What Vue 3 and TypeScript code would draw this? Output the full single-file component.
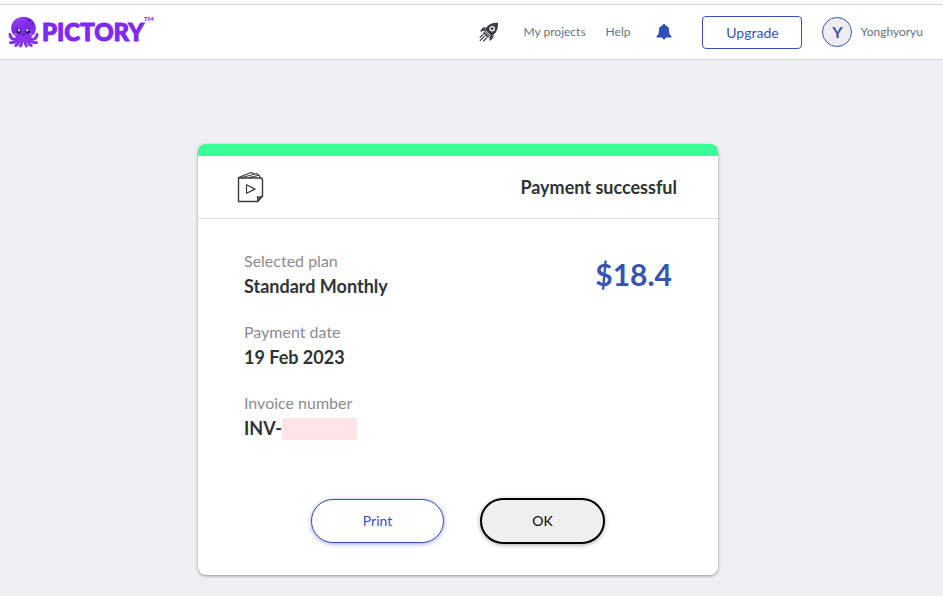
<script setup lang="ts">
interface Detail {
  label: string
  value: string
  redacted?: boolean
}

const userName = 'Yonghyoryu'
const amount = '$18.4'
const details: Detail[] = [
  { label: 'Selected plan', value: 'Standard Monthly' },
  { label: 'Payment date', value: '19 Feb 2023' },
  { label: 'Invoice number', value: 'INV-', redacted: true },
]

function printReceipt(): void {
  window.print()
}
</script>

<template>
  <div class="page">
    <header class="topbar">
      <a class="brand" href="#" aria-label="Pictory home">
        <svg class="mascot" viewBox="0 0 32 32" aria-hidden="true">
          <defs>
            <linearGradient id="skin" x1="0" y1="0" x2="0.3" y2="1">
              <stop offset="0" stop-color="#9a48f6" />
              <stop offset="0.5" stop-color="#7c2ae8" />
              <stop offset="1" stop-color="#8a34f0" />
            </linearGradient>
          </defs>
          <g fill="none" stroke="#8430ec" stroke-width="3" stroke-linecap="round">
            <path d="M10 22C6 25 2.500 23 2 18.500" />
            <path d="M22 22c4 3 7.500 1 8-3.500" />
            <path d="M11 23c-2 3-5 4.500-8.500 4" />
            <path d="M21 23c2 3 5 4.500 8.500 4" />
            <path d="M12 23c-.5 4-2 6-4 7" />
            <path d="M20 23c.5 4 2 6 4 7" />
            <path d="M14.500 24c0 3-.5 5-1.500 6.500" />
            <path d="M17.500 24c0 3 .5 5 1.500 6.500" />
          </g>
          <path d="M16 .3C8.500.3 3.300 5.500 3.300 12c0 4.500 2 6.500 4.200 8 1 2.500 3 6.500 8.500 6.500s7.500-4 8.500-6.500c2.200-1.500 4.200-3.500 4.200-8C28.700 5.500 23.500.3 16 .3z" fill="url(#skin)" />
          <circle cx="22" cy="4" r="1.500" fill="#5f16bd" />
          <circle cx="25" cy="7.500" r="1" fill="#5f16bd" />
          <circle cx="19.300" cy="2.600" r="0.700" fill="#5f16bd" />
          <ellipse cx="11" cy="15.200" rx="2.100" ry="2.500" fill="#1c1035" />
          <ellipse cx="20.300" cy="15.200" rx="2.100" ry="2.500" fill="#1c1035" />
          <circle cx="11.300" cy="14.300" r="1.200" fill="#fff" />
          <circle cx="20" cy="14.300" r="1.200" fill="#fff" />
          <path d="M14 18q1.700 1.700 3.400 0" fill="none" stroke="#351069" stroke-width="0.900" />
          <ellipse cx="7.800" cy="18.200" rx="1.500" ry="1" fill="#b65cf5" />
          <ellipse cx="23.500" cy="18.200" rx="1.500" ry="1" fill="#b65cf5" />
        </svg>
        <span class="wordmark">PICTORY</span><span class="trademark">TM</span>
      </a>

      <nav class="nav" aria-label="Main">
        <a class="icon-link rocket" href="#" aria-label="What's new">
          <svg viewBox="0 0 20 20" aria-hidden="true">
            <path fill="#3c3f42" d="M19 .8C13.500.6 10.200 2 7.500 5.200L5 8.800l6.300 6.300 3.500-2.500C17.900 9.700 19.400 6.200 19 .8z" />
            <circle cx="13.200" cy="6.700" r="2.100" fill="#3c3f42" stroke="#fff" stroke-width="1.300" />
            <path fill="#3c3f42" d="M7 5.300C4.500 5 2.500 6.500 1 9.700l3.800-.6zM14.600 13c.4 2.600-1.200 4.400-4.200 6l.3-4z" />
            <path d="M6.600 8.600l4.800 4.800" stroke="#fff" stroke-width="0.800" />
            <path d="M4.600 10.300l5 5" stroke="#3c3f42" stroke-width="1.800" fill="none" />
            <path d="M4 12.500l-3 2.800M5.600 14.200l-4.400 4.300M7.500 16l-3 3" fill="none" stroke="#3c3f42" stroke-width="1.100" stroke-linecap="round" />
          </svg>
        </a>
        <a class="link" href="#">My projects</a>
        <a class="link" href="#">Help</a>
        <a class="icon-link bell" href="#" aria-label="Notifications">
          <svg viewBox="0 0 16 16" aria-hidden="true">
            <path fill="#2f4dbd" d="M8 0c.8 0 1.200.5 1.200 1.200C11.700 1.800 13 3.600 13 6c0 3.500.7 5 2.500 6.300v1.200H.5v-1.200C2.300 11 3 9.500 3 6c0-2.400 1.300-4.200 3.800-4.800C6.800.5 7.200 0 8 0zM6.300 13.500h3.400c0 1.300-.7 2-1.700 2s-1.700-.7-1.700-2z" />
          </svg>
        </a>
        <button class="upgrade" type="button">Upgrade</button>
        <a class="account" href="#">
          <span class="avatar">{{ userName.charAt(0) }}</span>
          <span class="name">{{ userName }}</span>
        </a>
      </nav>
    </header>

    <main class="content">
      <section class="card">
        <div class="card-head">
          <svg class="storyboard" viewBox="0 0 28 32" aria-hidden="true">
            <g fill="none" stroke="#3a3a3a" stroke-width="1.400" stroke-linejoin="round" stroke-linecap="round">
              <path d="M25.500 25V9c0-1.300-.7-2-2-2H1.500v23.500h19z" />
              <path d="M20.500 30.500c.7-1.500.5-3 0-4.500 1.800.4 3.800 0 5-1z" />
              <path d="M1.500 6.500L14 1.500l3 1M5 6.500l15-4 1.500 1.800M12 6.500l10-2.200 1.500 2.700" stroke-width="1.100" />
              <path d="M9.500 13.800v8.500l8.500-4.200z" stroke-width="1.200" />
            </g>
          </svg>
          <h1 class="title">Payment successful</h1>
        </div>

        <div class="card-body">
          <dl class="details">
            <div v-for="item in details" :key="item.label" class="detail">
              <dt>{{ item.label }}</dt>
              <dd>{{ item.value }}<span v-if="item.redacted" class="redaction"></span></dd>
            </div>
          </dl>
          <p class="amount">{{ amount }}</p>
        </div>

        <div class="actions">
          <button class="action print" type="button" @click="printReceipt">Print</button>
          <button class="action ok" type="button">OK</button>
        </div>
      </section>
    </main>
  </div>
</template>

<style>
body {
  background: #efeef3;
}
</style>

<style scoped>
.page {
  min-height: 100vh;
  box-sizing: border-box;
  padding-top: 4px;
  background: linear-gradient(#fff 4px, #efeef3 4px);
  font-family: Lato, "Liberation Sans", sans-serif;
  color: #2f3335;
}

a {
  color: inherit;
  text-decoration: none;
}

.topbar {
  display: flex;
  align-items: center;
  justify-content: space-between;
  box-sizing: border-box;
  height: 56px;
  padding: 0 20px 0 8px;
  background: #fff;
  border-top: 1px solid #d9d9dc;
  border-bottom: 1px solid #dcdce0;
}

.brand {
  display: flex;
  align-items: center;
  color: #7f2aef;
}

.mascot {
  width: 31px;
  height: 32px;
  margin-right: 3px;
}

.wordmark {
  font-size: 24px;
  line-height: 32px;
  font-weight: 900;
  -webkit-text-stroke: 1px #7f2aef;
}

.trademark {
  align-self: flex-start;
  font-size: 6px;
  line-height: 6px;
  font-weight: 900;
}

.nav {
  display: flex;
  align-items: center;
  gap: 20px;
  font-size: 12px;
  line-height: 16px;
  color: #67737c;
}

.icon-link {
  display: flex;
}

.rocket svg {
  width: 20px;
  height: 20px;
}

.rocket {
  margin-right: 5px;
}

.bell {
  margin: 0 10px 0 6px;
}

.bell svg {
  width: 16px;
  height: 16px;
}

.upgrade {
  box-sizing: border-box;
  width: 100px;
  height: 33px;
  padding: 0;
  border: 1px solid #3953b0;
  border-radius: 4px;
  background: #fff;
  color: #3953b0;
  font: 14px Lato, "Liberation Sans", sans-serif;
}

.account {
  display: flex;
  align-items: center;
  gap: 8px;
}

.avatar {
  display: grid;
  place-items: center;
  box-sizing: border-box;
  width: 30px;
  height: 30px;
  border: 1px solid #3953b0;
  border-radius: 50%;
  background: #eeeef1;
  color: #3f51a8;
  font-size: 16px;
  font-weight: 700;
}

.content {
  display: flex;
  justify-content: center;
  padding: 84px 27px 20px 0;
}

.card {
  box-sizing: border-box;
  width: 100%;
  max-width: 520px;
  border-top: 12px solid #38ff96;
  border-radius: 8px;
  background: #fff;
  box-shadow: 0 1px 3px rgba(0, 0, 0, 0.4);
}

.card-head {
  display: flex;
  align-items: center;
  justify-content: space-between;
  padding: 15px 41px 15px 39px;
  border-bottom: 1px solid #dcdce0;
}

.storyboard {
  width: 28px;
  height: 32px;
}

.title {
  margin: 0;
  font-size: 18px;
  line-height: 24px;
  font-weight: 700;
}

.card-body {
  display: flex;
  justify-content: space-between;
  padding: 30px 46px 0;
}

.details {
  display: grid;
  gap: 21px;
  margin: 0;
}

.detail {
  display: grid;
  gap: 2px;
}

dt {
  font-size: 16px;
  line-height: 23px;
  color: #8b8b90;
}

dd {
  display: flex;
  align-items: center;
  margin: 0;
  font-size: 18px;
  line-height: 25px;
  font-weight: 700;
}

.redaction {
  width: 75px;
  height: 22px;
  background: #ffe5e5;
}

.amount {
  margin: 5px 0 0;
  font-size: 30px;
  line-height: 40px;
  font-weight: 700;
  color: #3953b0;
}

.actions {
  display: flex;
  align-items: center;
  justify-content: center;
  gap: 36px;
  padding: 57px 0 31px;
}

.action {
  box-sizing: border-box;
  padding: 0 0 2px;
  border-radius: 23px;
  font: 14px Lato, "Liberation Sans", sans-serif;
}

.print {
  width: 133px;
  height: 44px;
  border: 1px solid #3953b0;
  background: #fff;
  color: #3953b0;
  box-shadow: 0 1px 4px rgba(57, 83, 176, 0.5);
}

.ok {
  width: 125px;
  height: 46px;
  border: 2px solid #000;
  background: #efefef;
  color: #000;
  box-shadow: 0 1px 4px rgba(0, 0, 0, 0.35);
}
</style>
